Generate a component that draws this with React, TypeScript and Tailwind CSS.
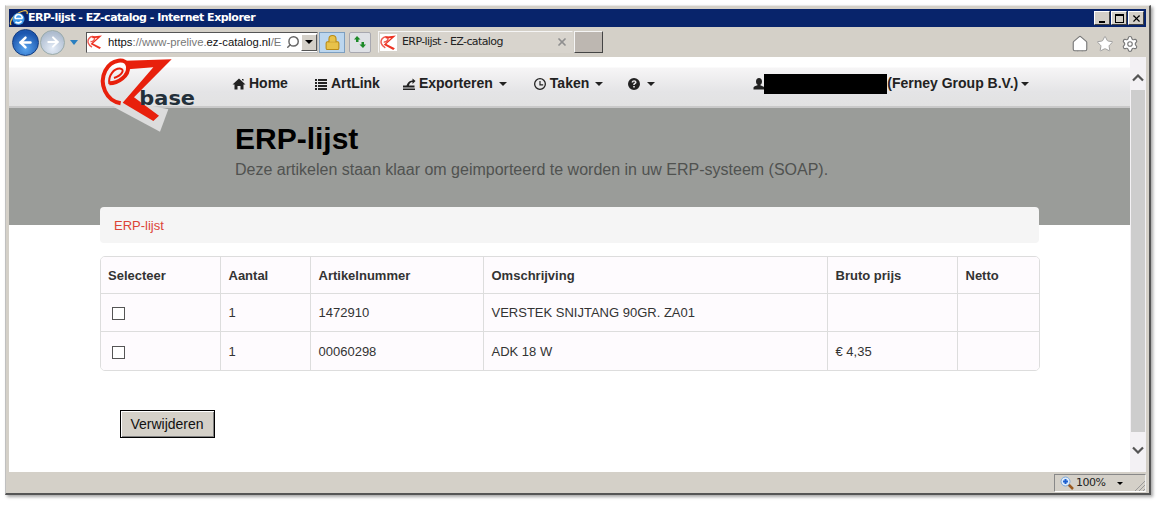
import { ArrowLeft, ArrowRight, Lock, Search, Star, Home, Settings, X } from 'lucide-react'

function Caret({ className = '' }: { className?: string }) {
  return <span className={`inline-block w-0 h-0 border-x-[4px] border-x-transparent border-t-[4px] border-t-[#222] ${className}`} />
}

function Favicon({ size = 16 }: { size?: number }) {
  return (
    <svg width={size} height={size} viewBox="0 0 16 16" className="shrink-0 bg-white">
      <path d="M5 13C1 11 0 7 2 4.500 4 2 7 2 7.500 4 8 6 5.500 8 3.500 7.500" fill="none" stroke="#ee5a50" strokeWidth="1.400" />
      <path d="M5 2.500 15 1.500 6 9.500 14 13.500 12.500 15 3.500 10 10.500 3.800 5.500 4.200z" fill="#ee3322" />
    </svg>
  )
}

// logo coordinates are taken at 3x, hence the viewBox
function Logo() {
  return (
    <svg width="120" height="90" viewBox="0 0 360 270" className="absolute left-[81px] top-[-7px]">
      <polygon points="70,170 125,155 235,178 210,245" fill="#dcdcdc" />
      <path d="M92 160C48 152 26 102 46 62 64 26 110 22 114 50 117 78 84 100 58 100" fill="none" stroke="#e8200c" strokeWidth="12" />
      <path d="M58 102C54 76 72 54 92 56 104 58 98 76 72 84" fill="none" stroke="#e8200c" strokeWidth="6" />
      <path d="M106 32 245 28 132 142 207 197 190 213 98 158 190 52 114 58z" fill="#e8200c" />
      <text x="148" y="165" fontFamily="DejaVu Sans, sans-serif" fontWeight="700" fontSize="58" fill="#23303a" textLength="167" lengthAdjust="spacingAndGlyphs">base</text>
    </svg>
  )
}

function NavIcon({ d }: { d: string }) {
  return (
    <svg width="14" height="14" viewBox="0 0 14 14" className="shrink-0">
      <path d={d} fill="#222" fillRule="evenodd" />
    </svg>
  )
}

const iconHome = 'M7 1.500 13.500 7.500h-2v5h-3v-3.500h-3v3.500h-3v-5h-2zM10 2h1.500v2L10 3z'
const iconList = 'M1 2h2v2H1zM4 2h9v2H4zM1 5h2v2H1zM4 5h9v2H4zM1 8h2v2H1zM4 8h9v2H4zM1 11h2v2H1zM4 11h9v2H4z'
const iconExport = 'M1 8.500h3.500l1-2c1-2 3-3 5-3V1.500l3 2.500-3 3V5c-2 0-3 1.500-3.500 3.500h5.500v2H1zM1 11.500h12V13H1z'
const iconClock = 'M7 1a6 6 0 1 0 0 12A6 6 0 0 0 7 1zm0 1.300a4.700 4.700 0 1 1 0 9.400 4.700 4.700 0 0 1 0-9.400zM6.400 4h1.200v3.200h2.600v1.200H6.400z'
const iconHelp = 'M7 1a6 6 0 1 0 0 12A6 6 0 0 0 7 1zM4.600 5.400C4.800 4 5.800 3.300 7.100 3.300c1.400 0 2.400.8 2.400 2 0 1-.6 1.400-1.200 1.800-.4.3-.6.5-.6 1H6.200c0-1 .3-1.500 1-2 .5-.3.7-.5.7-.8 0-.4-.3-.7-.8-.7s-.9.3-1 .9zM6.200 9h1.600v1.600H6.200z'
const iconUser = 'M7 1c1.800 0 3 1.400 3 3.400 0 1.400-.6 2.600-1.500 3.200v1c2 .6 4 1.300 4 2.400v1.500h-11V10.600c0-1.100 2-1.800 4-2.400v-.6C4.600 7 4 5.800 4 4.400 4 2.400 5.200 1 7 1z'

function NavItem({ icon, label, caret }: { icon: string; label?: string; caret?: boolean }) {
  return (
    <div className="flex items-center gap-[3px] text-[14px] font-bold text-[#222]">
      <NavIcon d={icon} />
      {label && <span>{label}</span>}
      {caret && <Caret className="ml-[3px]" />}
    </div>
  )
}

function WinButton({ children }: { children: React.ReactNode }) {
  return (
    <div className="w-[16px] h-[14px] bg-[#d4d0c8] border border-t-white border-l-white border-r-[#404040] border-b-[#404040] flex items-center justify-center text-black">
      {children}
    </div>
  )
}

const columns = ['w-[119px]', 'w-[90px]', 'w-[173px]', 'w-[344px]', 'w-[130px]', 'w-[84px]']
const headers = ['Selecteer', 'Aantal', 'Artikelnummer', 'Omschrijving', 'Bruto prijs', 'Netto']
const rows = [
  { aantal: '1', nummer: '1472910', omschrijving: 'VERSTEK SNIJTANG 90GR. ZA01', prijs: '' },
  { aantal: '1', nummer: '00060298', omschrijving: 'ADK 18 W', prijs: '€ 4,35' },
]

export default function App() {
  return (
    <div className="w-[1159px] h-[505px] bg-white pl-[5px] pt-[5px] overflow-hidden font-['Liberation_Sans',sans-serif]">
      <div className="w-[1146px] h-[490px] bg-[#d4d0c8] border-t border-l border-t-[#e8e8e8] border-l-[#c0c0c0] border-r-2 border-b-2 border-r-[#555] border-b-[#555] pl-[3px] pt-[3px] pr-[3px] flex flex-col shadow-[2px_2px_3px_rgba(0,0,0,0.35)]">
        {/* title bar */}
        <div className="h-[18px] shrink-0 bg-[#08246b] flex items-center text-white text-[11px] font-bold font-['DejaVu_Sans',sans-serif]">
          <svg width="19" height="18" viewBox="0 0 19 18" className="shrink-0">
            <path d="M2 16C0 13 4 5 14 2c3-1 5 0 4 3" fill="none" stroke="#f0c24a" strokeWidth="1.300" />
            <circle cx="9.500" cy="10" r="6" fill="#3f9be8" />
            <path d="M6 9.500h7.500M6.500 13c2 1.500 5 1 6-1M6 9.500C6 6.500 8 5.500 9.500 5.500S13 6.500 13.500 9.500" fill="none" stroke="#fff" strokeWidth="1.700" />
          </svg>
          <span className="tracking-[-0.5px] pt-[1px]">ERP-lijst - EZ-catalog - Internet Explorer</span>
          <div className="ml-auto flex gap-[1px] pr-[2px]">
            <WinButton><span className="w-[6px] h-[2px] bg-black mt-[7px]" /></WinButton>
            <WinButton><span className="w-[9px] h-[9px] border border-black border-t-2" /></WinButton>
            <WinButton><X size={11} strokeWidth={2.5} /></WinButton>
          </div>
        </div>

        {/* ie toolbar */}
        <div className="h-[30px] shrink-0 flex items-center pl-[3px]">
          <div className="w-[27px] h-[27px] rounded-full bg-[radial-gradient(circle_at_50%_75%,#5aa5ef,#1c56ae_70%)] border border-[#123c80] flex items-center justify-center text-white">
            <ArrowLeft size={17} strokeWidth={3.5} />
          </div>
          <div className="w-[25px] h-[25px] ml-[1px] rounded-full bg-[radial-gradient(circle_at_50%_75%,#e5edf8,#aebccf_75%)] border border-[#9aa] flex items-center justify-center text-white">
            <ArrowRight size={16} strokeWidth={3} />
          </div>
          <Caret className="ml-[5px] !border-t-[#2a7fc0] !border-x-[4px] !border-t-[5px]" />
          <div className="ml-[8px] w-[232px] h-[21px] bg-white border border-t-[#555] border-l-[#555] border-b-[#bbb] border-r-[#bbb] flex items-center">
            <Favicon size={16} />
            <span className="ml-[5px] text-[11.3px] text-[#111] whitespace-nowrap">
              https<span className="text-[#777]">://www-prelive.</span>ez-catalog.nl<span className="text-[#777]">/E</span>
            </span>
            <Search size={14} className="ml-auto text-[#666] -scale-x-100 mr-[1px]" strokeWidth={2.5} />
            <div className="w-[16px] h-[17px] bg-[#d4d0c8] border border-t-white border-l-white border-b-[#555] border-r-[#555] flex items-center justify-center"><Caret className="!border-t-black" /></div>
          </div>
          <div className="w-[26px] h-[21px] ml-[1px] bg-[#bcd6ee] border border-[#7d9fc0] flex items-center justify-center">
            <Lock size={17} className="text-[#b98a14]" fill="#e8c24a" strokeWidth={1.5} />
          </div>
          <div className="w-[22px] h-[21px] ml-[4px] bg-[#dfe1e6] border border-[#a8a8b0] rounded-[2px] flex items-center justify-center">
            <svg width="14" height="14" viewBox="0 0 14 14">
              <path d="M4 1 7.500 4.500H5.500V7H3V4.500H1zM10 13 6.500 9.500h2V7H11v2.500h2z" fill="#1d8a28" />
            </svg>
          </div>
          <div className="w-[195px] h-[22px] ml-[7px] bg-[#d8d4cd] border border-t-[#f5f5f5] border-l-[#f5f5f5] border-[#d8d4cd] flex items-center pl-[1px]">
            <Favicon size={17} />
            <span className="ml-[5px] text-[11px] text-[#222] font-['DejaVu_Sans',sans-serif] tracking-[-0.6px] whitespace-nowrap">ERP-lijst - EZ-catalog</span>
            <X size={12} strokeWidth={3.5} className="ml-auto mr-[4px] text-[#8f8f8f]" />
          </div>
          <div className="w-[29px] h-[22px] ml-[1px] bg-[#bdb7b1] border border-t-[#f5f5f5] border-l-[#f5f5f5] border-b-[#444] border-r-[#444]" />
          <div className="ml-auto flex items-center gap-[7px] pr-[7px] pt-[4px]">
            <Home size={18} className="text-[#777]" fill="#fff" strokeWidth={1.5} />
            <Star size={18} className="text-[#999]" fill="#fff" strokeWidth={1.2} />
            <Settings size={18} className="text-[#777]" fill="#fff" strokeWidth={1.5} />
          </div>
        </div>

        {/* page + scrollbar */}
        <div className="h-[415px] shrink-0 flex bg-white">
          <div className="w-[1121px] relative">
            <div className="h-[51px] pt-[10px] bg-[linear-gradient(#ffffff_0,#ffffff_10px,#f6f5f6_11px,#e4e4e6_35px,#e2e2e2_100%)] border-b-[2px] border-b-[#c9c9c9] flex items-start">
              <div className="flex items-center h-[33px] pl-[223px] w-full">
                <NavItem icon={iconHome} label="Home" />
                <div className="w-[26px]" />
                <NavItem icon={iconList} label="ArtLink" />
                <div className="w-[22px]" />
                <NavItem icon={iconExport} label="Exporteren" caret />
                <div className="w-[26px]" />
                <NavItem icon={iconClock} label="Taken" caret />
                <div className="w-[24px]" />
                <NavItem icon={iconHelp} caret />
                <div className="w-[97px]" />
                <NavIcon d={iconUser} />
                <div className="w-[123px] h-[20px] bg-black -ml-[2px]" />
                <div className="flex items-center text-[14px] font-bold text-[#222] whitespace-nowrap">
                  (Ferney Group B.V.)
                  <Caret className="ml-[3px]" />
                </div>
              </div>
            </div>
            <Logo />
            <div className="h-[117px] bg-[#9a9c99] pl-[226px] pt-[13px]">
              <h1 className="text-[30px] leading-[36px] font-bold text-black">ERP-lijst</h1>
              <p className="text-[16px] leading-[24px] font-light text-[#505250] mt-[1px] whitespace-nowrap">
                Deze artikelen staan klaar om geimporteerd te worden in uw ERP-systeem (SOAP).
              </p>
            </div>

            <div className="ml-[91px] w-[939px] -mt-[18px] h-[36px] relative bg-[#f5f5f5] rounded-[4px] px-[14px] pt-[1px] flex items-center text-[13px] text-[#dc4436]">
              ERP-lijst
            </div>

            <div className="ml-[91px] mt-[13px] w-[940px] border border-[#dddddd] rounded-[5px] overflow-hidden">
              <table className="w-full table-fixed border-collapse text-[13px] text-[#333] bg-[#fefbfe]">
                <colgroup>
                  {columns.map((c) => <col key={c} className={c} />)}
                </colgroup>
                <thead>
                  <tr className="h-[36px]">
                    {headers.map((h, i) => (
                      <th key={h} className={`text-left font-bold px-[8px] pt-[1px] ${i > 0 ? 'border-l border-[#dddddd]' : 'pl-[7px]'}`}>{h}</th>
                    ))}
                  </tr>
                </thead>
                <tbody>
                  {rows.map((r, i) => (
                    <tr key={r.nummer} className={i === 0 ? 'h-[38px] border-t border-[#dddddd]' : 'h-[39px] border-t border-[#dddddd]'}>
                      <td className="px-[11px] pt-[3px]">
                        <div className="w-[13px] h-[13px] border border-[#555] bg-white" />
                      </td>
                      <td className="px-[8px] pt-[1px] border-l border-[#dddddd]">{r.aantal}</td>
                      <td className="px-[8px] pt-[1px] border-l border-[#dddddd]">{r.nummer}</td>
                      <td className="px-[8px] pt-[1px] border-l border-[#dddddd]">{r.omschrijving}</td>
                      <td className="px-[8px] pt-[1px] border-l border-[#dddddd]">{r.prijs}</td>
                      <td className="px-[8px] border-l border-[#dddddd]" />
                    </tr>
                  ))}
                </tbody>
              </table>
            </div>

            <button className="ml-[111px] mt-[39px] w-[95px] h-[28px] pr-[1px] bg-[#d4d0c8] border border-black shadow-[inset_1px_1px_0_#fff,inset_-1px_-1px_0_#808080] text-[14px] text-[#111] block">
              Verwijderen
            </button>
          </div>

          {/* scrollbar */}
          <div className="w-[16px] flex flex-col bg-[#f3f1f4] pr-[1px]">
            <div className="h-[33px] flex items-center justify-center pt-[8px] text-[#444]">
              <svg width="12" height="8" viewBox="0 0 12 8"><path d="M1 6.500 6 1.500l5 5" fill="none" stroke="#555" strokeWidth="2.200" /></svg>
            </div>
            <div className="h-[342px] bg-[#cdcdcd] ml-[1px]" />
            <div className="flex-1 flex items-center justify-center pb-[5px]">
              <svg width="12" height="8" viewBox="0 0 12 8"><path d="M1 1.500 6 6.500l5-5" fill="none" stroke="#555" strokeWidth="2.200" /></svg>
            </div>
          </div>
        </div>

        {/* status bar */}
        <div className="flex-1 flex justify-end items-start pt-[2px]">
          <div className="w-[92px] h-[18px] border border-t-[#888] border-l-[#888] border-r-[#eee] border-b-[#fff] flex items-center text-[11px] text-[#222] font-['DejaVu_Sans',sans-serif] pl-[5px]">
            <svg width="14" height="14" viewBox="0 0 14 14" className="shrink-0">
              <path d="M8 8l5 5" stroke="#9a5a20" strokeWidth="2.500" />
              <circle cx="5.500" cy="5.500" r="4.500" fill="#dcebfb" stroke="#7fa8d8" />
              <path d="M3 5.500h5M5.500 3v5" stroke="#1b5fd0" strokeWidth="2" />
            </svg>
            <span className="ml-[2px] tracking-[-0.5px]">100%</span>
            <Caret className="ml-[12px] !border-t-black !border-x-[3px] !border-t-[3px]" />
            <svg width="12" height="12" viewBox="0 0 12 12" className="ml-auto self-end shrink-0">
              <path d="M2 12 12 2M6 12l6-6M10 12l2-2" stroke="#9a9a9a" strokeWidth="1" />
            </svg>
          </div>
        </div>
      </div>
    </div>
  )
}
